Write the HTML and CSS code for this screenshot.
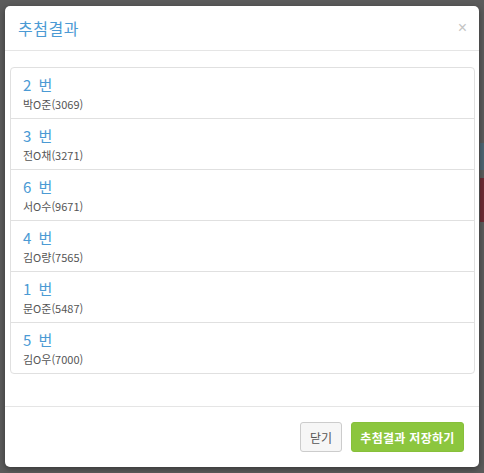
FILE: index.html
```html
<!DOCTYPE html>
<html lang="ko">
<head>
  <meta charset="UTF-8">
  <title>추첨결과</title>
  <link rel="stylesheet" href="styles.css">
</head>
<body>
  <div class="backdrop">
    <div class="edge-blue"></div>
    <div class="edge-red"></div>
  </div>
  <div class="modal">
    <div class="modal-header">
      <h4 class="modal-title">추첨결과</h4>
      <span class="close">&times;</span>
    </div>
    <div class="modal-body">
      <ul class="list-group">
        <li class="list-item"><h5>2 번</h5><p>박O준(3069)</p></li>
        <li class="list-item"><h5>3 번</h5><p>전O채(3271)</p></li>
        <li class="list-item"><h5>6 번</h5><p>서O수(9671)</p></li>
        <li class="list-item"><h5>4 번</h5><p>김O량(7565)</p></li>
        <li class="list-item"><h5>1 번</h5><p>문O준(5487)</p></li>
        <li class="list-item"><h5>5 번</h5><p>김O우(7000)</p></li>
      </ul>
    </div>
    <div class="modal-footer">
      <button class="btn btn-default">닫기</button>
      <button class="btn btn-success">추첨결과 저장하기</button>
    </div>
  </div>
</body>
</html>
```

FILE: styles.css
```css
* { box-sizing: border-box; }
body {
  margin: 0;
  background: #5b5b5b;
  font-family: "Noto Sans CJK KR", "Noto Sans", sans-serif;
  height: 473px;
  overflow: hidden;
}
.backdrop { position: absolute; right: 0; top: 0; width: 6px; height: 473px; }
.edge-blue { position: absolute; top: 143px; right: 0; width: 4px; height: 27px; background: #4d6673; }
.edge-red { position: absolute; top: 178px; right: 0; width: 4px; height: 44px; background: #6e2a33; }

.modal {
  position: relative;
  margin: 6px 5px 0 5px;
  width: 474px;
  height: 461px;
  background: #fff;
  border-radius: 5px;
  display: flex;
  flex-direction: column;
  box-shadow: 0 2px 6px rgba(0,0,0,0.4);
}
.modal-header {
  height: 46px;
  padding: 0 13px 0 13px;
  border-bottom: 1px solid #e5e5e5;
  display: flex;
  align-items: center;
  justify-content: space-between;
}
.modal-title {
  margin: 0;
  font-size: 16px;
  font-weight: normal;
  color: #4b9ad4;
  letter-spacing: 0.5px;
}
.close { color: #c4c4c4; font-size: 16px; margin-right: -1px; font-family: "Liberation Sans", sans-serif; }

.modal-body { padding: 16px 4px 32px 5px; flex: 1; }
.list-group {
  list-style: none;
  margin: 0;
  padding: 0;
  border: 1px solid #e0e0e0;
  border-radius: 4px;
}
.list-item {
  padding: 5px 12px 6px;
  border-bottom: 1px solid #e0e0e0;
  height: 51px;
}
.list-item:last-child { border-bottom: none; height: 50px; }
.list-item h5 {
  margin: 0;
  font-size: 15px;
  font-weight: normal;
  line-height: 23px;
  color: #4b9ad4;
  word-spacing: 3px;
}
.list-item p {
  margin: 0;
  font-size: 11px;
  line-height: 16px;
  color: #555;
}

.modal-footer {
  height: 62px;
  border-top: 1px solid #e5e5e5;
  padding: 0 15px;
  display: flex;
  align-items: center;
  justify-content: flex-end;
  gap: 9px;
}
.btn {
  height: 30px;
  border-radius: 3px;
  font-family: inherit;
  font-size: 12px;
  padding: 0;
  white-space: nowrap;
}
.btn-default { width: 42px; background: #f6f6f6; border: 1px solid #ccc; color: #555; }
.btn-success { width: 113px; background: #8cc63e; border: 1px solid #87c03a; color: #fff; font-weight: bold; letter-spacing: 0.3px; }
```
